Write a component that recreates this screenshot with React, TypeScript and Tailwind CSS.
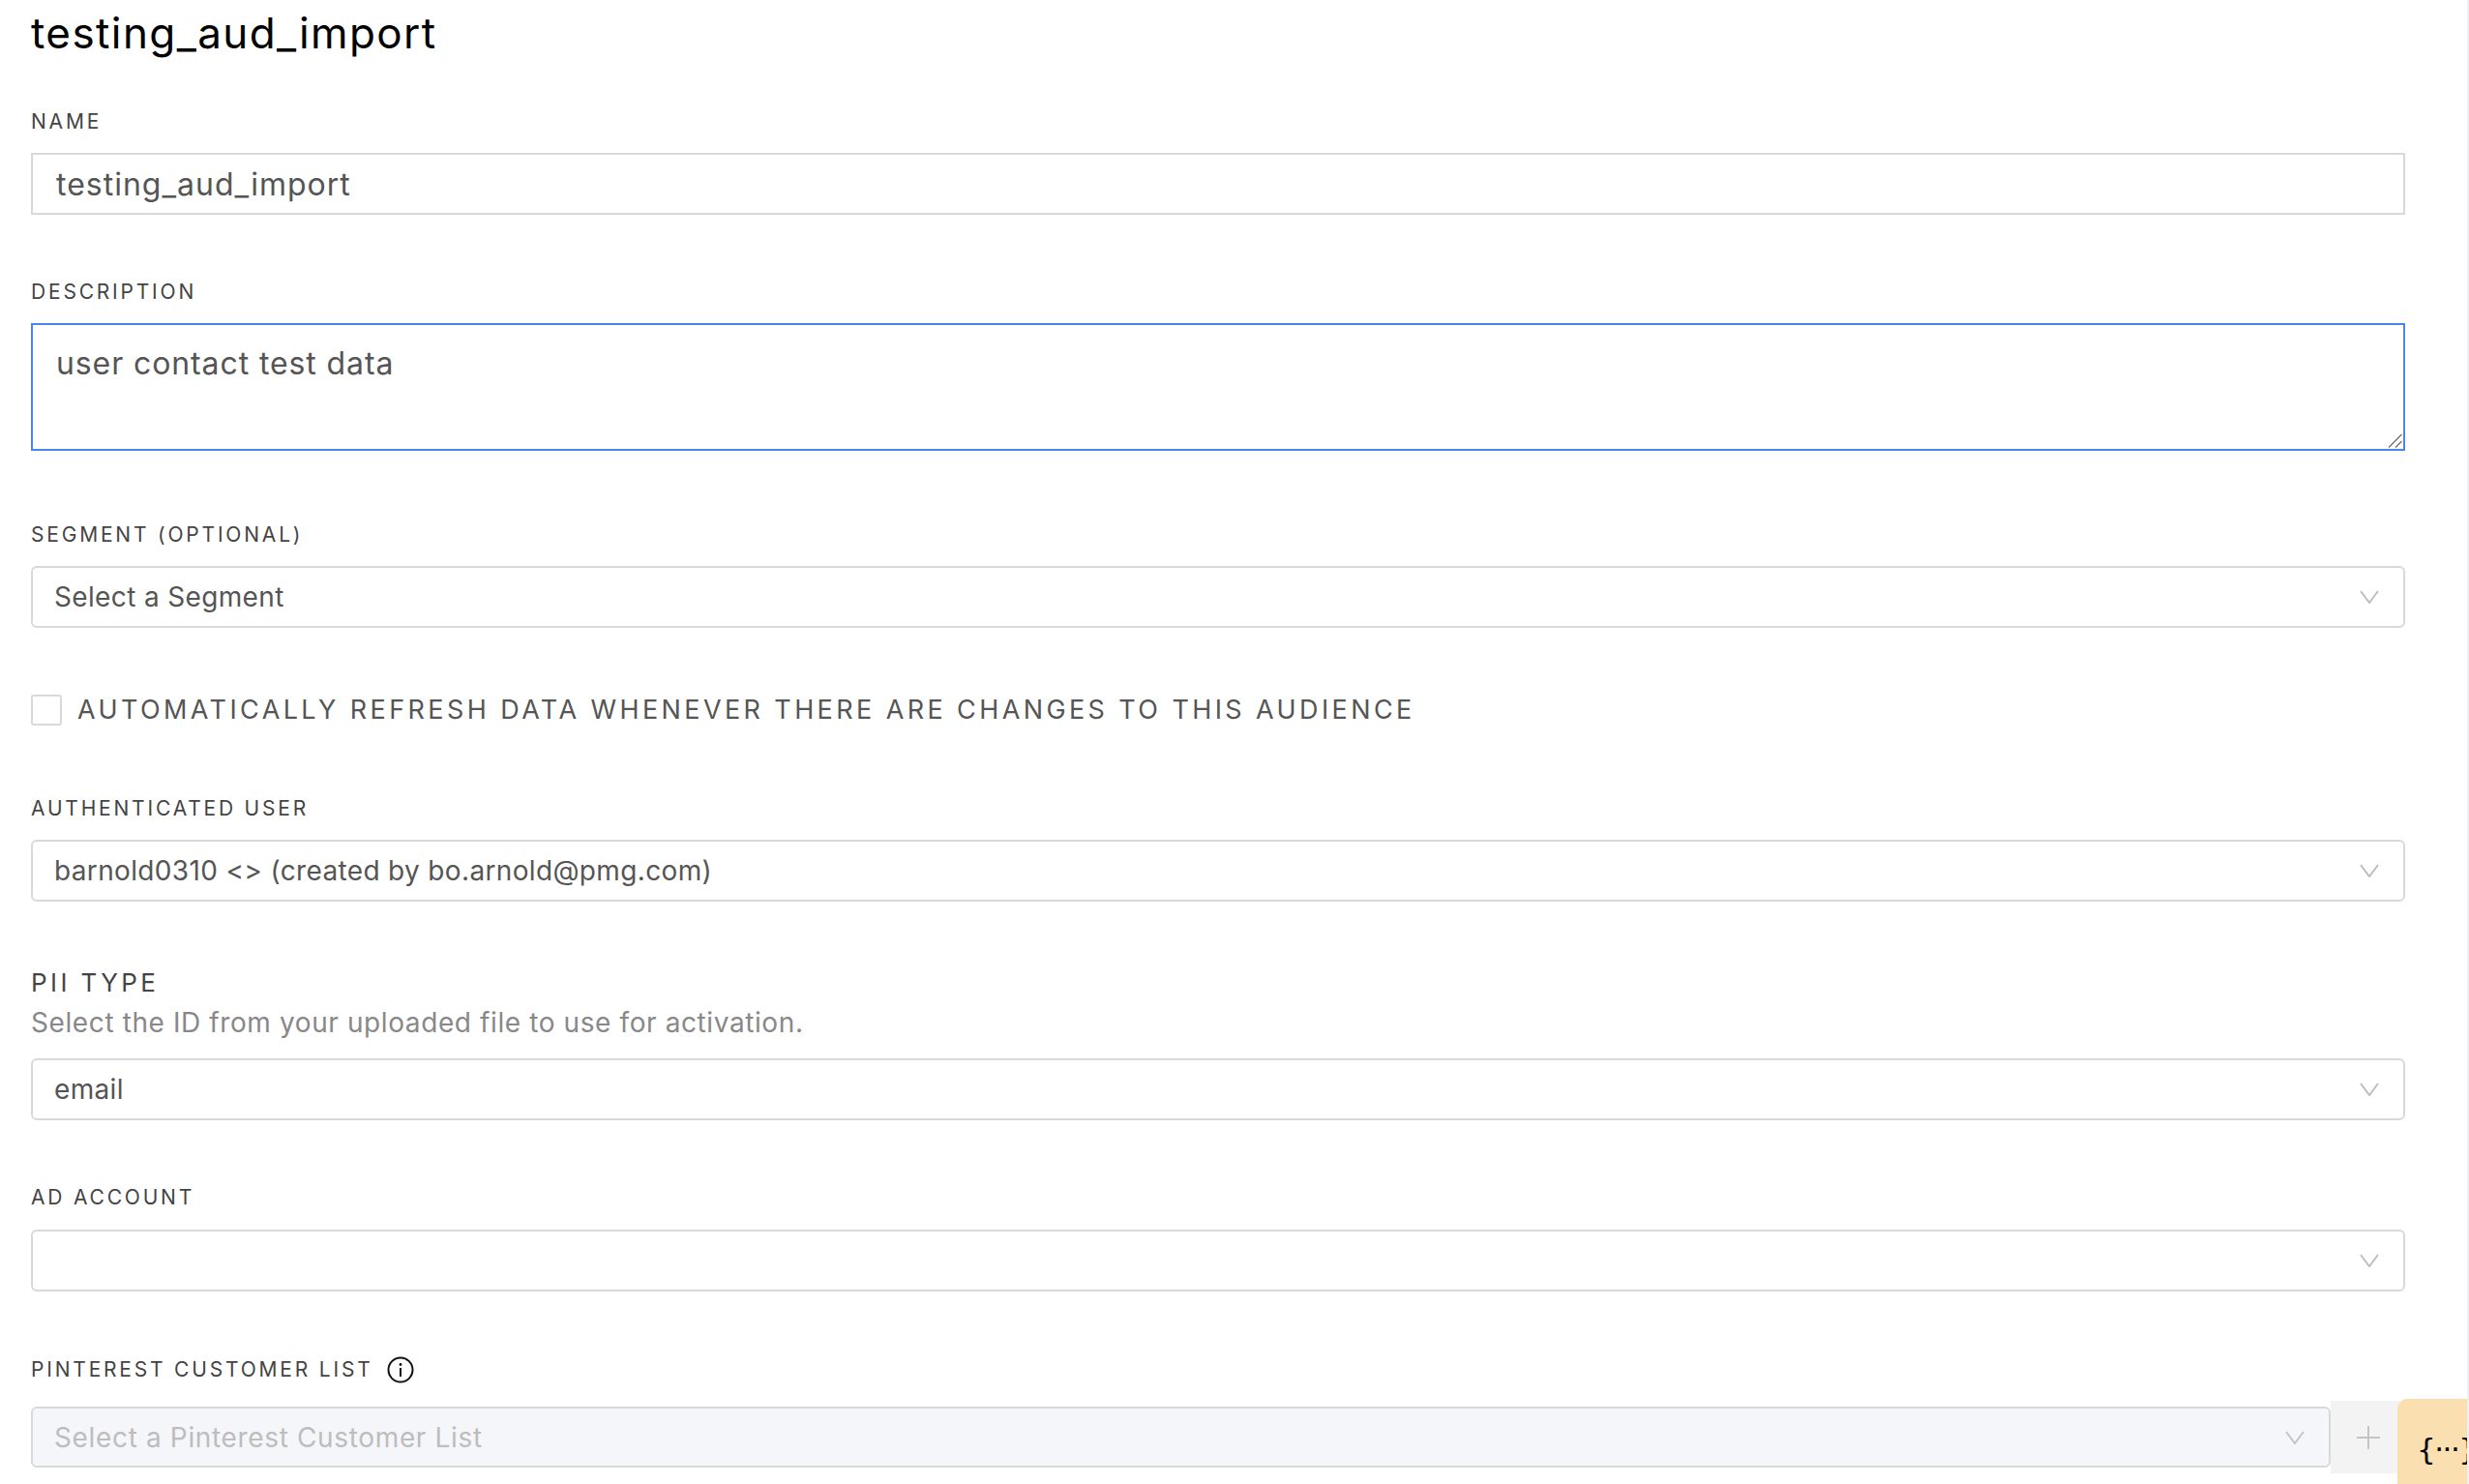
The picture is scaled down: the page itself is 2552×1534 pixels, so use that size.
import React from "react";

const font = "font-['Inter','Noto_Sans',sans-serif]";

function Chevron({ muted }: { muted?: boolean }) {
  return (
    <svg width="20" height="14" viewBox="0 0 20 14" fill="none" className="shrink-0">
      <path d="M1 1l9 12 9-12" stroke={muted ? "#c4c4c4" : "#bdbdbd"} strokeWidth="2" />
    </svg>
  );
}

function Label({ children, className = "" }: { children: React.ReactNode; className?: string }) {
  return (
    <div className={`h-[28px] text-[21px] leading-[28px] tracking-[2.8px] text-[#444444] ${className}`}>
      {children}
    </div>
  );
}

function Select({ value, className = "" }: { value?: string; className?: string }) {
  return (
    <div className={`flex h-[64px] items-center justify-between rounded-[6px] border-2 border-[#d9d9d9] bg-white pl-[22px] pr-[25px] ${className}`}>
      <span className="text-[28px] tracking-[0.35px] text-[#555555]">{value}</span>
      <Chevron />
    </div>
  );
}

export default function App() {
  return (
    <div className={`relative h-[1534px] w-full overflow-hidden bg-white ${font}`}>
      <div className="mr-[66px] ml-[32px]">
        <h1 className="h-[56px] pt-[6px] text-[44px] leading-[56px] font-normal tracking-[1.4px] text-black">testing_aud_import</h1>
        <Label className="mt-[56px] mb-[18px]">NAME</Label>
        <input
          readOnly
          value="testing_aud_import"
          className="block h-[64px] w-full border-2 border-[#d9d9d9] px-[24px] text-[32px] tracking-[1px] text-[#555555] outline-none"
        />
        <Label className="mt-[66px] mb-[18px]">DESCRIPTION</Label>
        <div className="relative">
          <textarea
            readOnly
            value="user contact test data"
            className="block h-[132px] w-full resize-none border-2 border-[#4a86e8] px-[24px] py-[20px] text-[32px] leading-[40px] tracking-[0.9px] text-[#555555] outline-none"
          />
          <svg width="15" height="15" viewBox="0 0 15 15" fill="none" className="absolute right-[3px] bottom-[3px]">
            <path d="M1 14.5L14.5 1M8 14.5L14.5 8" stroke="#6f6f6f" strokeWidth="1.3" />
          </svg>
        </div>
        <Label className="mt-[73px] mb-[18px]">SEGMENT (OPTIONAL)</Label>
        <Select value="Select a Segment" />
        <div className="mt-[69px] flex h-[32px] items-center gap-[16px]">
          <div className="h-[32px] w-[32px] rounded-[3px] border-2 border-[#d9d9d9]" />
          <span className="mt-[1px] text-[27px] tracking-[3.4px] text-[#555555]">
            AUTOMATICALLY REFRESH DATA WHENEVER THERE ARE CHANGES TO THIS AUDIENCE
          </span>
        </div>
        <Label className="mt-[72px] mb-[18px]">AUTHENTICATED USER</Label>
        <Select value="barnold0310 <> (created by bo.arnold@pmg.com)" />
        <div className="mt-[66px] h-[36px] text-[26px] leading-[36px] tracking-[3.4px] text-[#444444]">PII TYPE</div>
        <div className="mt-[5px] mb-[19px] h-[36px] text-[28px] leading-[36px] tracking-[0.6px] text-[#888888]">
          Select the ID from your uploaded file to use for activation.
        </div>
        <Select value="email" />
        <Label className="mt-[66px] mb-[19px]">AD ACCOUNT</Label>
        <Select />
        <div className="mt-[67px] mb-[24px] flex h-[28px] items-center gap-[14px]">
          <span className="text-[21px] leading-[28px] tracking-[2.8px] text-[#444444]">PINTEREST CUSTOMER LIST</span>
          <svg width="28" height="28" viewBox="0 0 28 28" fill="none">
            <circle cx="14" cy="14" r="12.5" stroke="#111111" strokeWidth="2" />
            <path d="M14 12v9" stroke="#111111" strokeWidth="2" />
            <circle cx="14" cy="8.5" r="1.4" fill="#111111" />
          </svg>
        </div>
        <div className="flex h-[63px] items-center">
          <div className="flex h-[63px] flex-1 items-center justify-between rounded-[6px] border-2 border-[#d9d9d9] bg-[#f5f6fa] pl-[22px] pr-[25px]">
            <span className="text-[28px] tracking-[0.65px] text-[#bdbdbd]">Select a Pinterest Customer List</span>
            <Chevron muted />
          </div>
          <div className="flex h-[75px] w-[77px] shrink-0 items-center justify-center rounded-r-[8px] bg-[#f3f3f3]">
            <svg width="26" height="26" viewBox="0 0 26 26" fill="none">
              <path d="M13 1v24M1 13h24" stroke="#c4c4c4" strokeWidth="2" />
            </svg>
          </div>
        </div>
      </div>
      <div className="absolute top-0 right-0 bottom-0 w-[2px] bg-[#eeeff4]" />
      <div className="absolute top-[1446px] right-[2px] bottom-0 flex w-[72px] items-start overflow-hidden rounded-tl-[10px] bg-[#fadfb0] pt-[32px] pl-[20px]">
        <span className="whitespace-nowrap font-['DejaVu_Sans',sans-serif] text-[31px] leading-[40px] tracking-[-1.5px] text-black">{"{···}"}</span>
      </div>
    </div>
  );
}
